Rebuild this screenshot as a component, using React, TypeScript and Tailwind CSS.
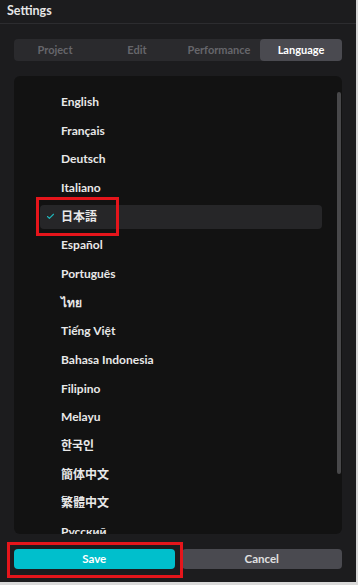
import { Check } from 'lucide-react'

const languages = [
  'English',
  'Français',
  'Deutsch',
  'Italiano',
  '日本語',
  'Español',
  'Português',
  'ไทย',
  'Tiếng Việt',
  'Bahasa Indonesia',
  'Filipino',
  'Melayu',
  '한국인',
  '簡体中文',
  '繁體中文',
  'Русский',
]

const tabs = ['Project', 'Edit', 'Performance', 'Language']

export default function App() {
  return (
    <div
      className="w-[358px] h-[585px] bg-[#d9d9d9] overflow-hidden"
      style={{ fontFamily: 'Lato, "Noto Sans", "DejaVu Sans", "Noto Sans CJK JP", sans-serif' }}
    >
      <div className="w-[356px] h-[582px] bg-[#1c1c1e] flex flex-col">
        {/* Header */}
        <div className="h-[24px] border-b border-[#2c2c2f] px-[7px] flex items-center">
          <span className="text-[12.5px] font-bold text-[#e6e6e6]">Settings</span>
        </div>

        {/* Tabs */}
        <div className="mx-[14px] mt-[15px] h-[22px] rounded-[4px] bg-[#2a2a2d] flex">
          {tabs.map((t) => (
            <div
              key={t}
              className={`flex-1 flex items-center justify-center rounded-[4px] text-[11px] font-bold ${
                t === 'Language' ? 'bg-[#4a4a50] text-white' : 'text-[#66666b]'
              }`}
            >
              {t}
            </div>
          ))}
        </div>

        {/* Language list */}
        <div className="relative mx-[14px] mt-[15px] h-[458px] rounded-[6px] bg-[#121212] overflow-hidden">
          <div className="pt-[14px] pl-[26px] pr-[20px] flex flex-col gap-[4.67px]">
            {languages.map((lang) => {
              const active = lang === '日本語'
              return (
                <div
                  key={lang}
                  className={`h-[24px] shrink-0 flex items-center rounded-[4px] ${active ? 'bg-[#262628]' : ''}`}
                >
                  <div className="w-[21px] flex justify-center">
                    {active && <Check className="w-[9px] h-[9px] text-[#1fb5b9]" strokeWidth={3} />}
                  </div>
                  <span className="text-[12px] font-bold text-[#e8e8e8]">{lang}</span>
                </div>
              )
            })}
          </div>
          {/* scrollbar */}
          <div className="absolute right-[1px] top-[16px] w-[4px] h-[382px] rounded-full bg-[#48484a]" />
          {/* annotation */}
          <div className="absolute left-[22px] top-[121px] w-[83px] h-[39px] border-[3px] border-[#e5151b]" />
        </div>

        {/* Buttons */}
        <div className="relative mx-[14px] mt-[15px] flex gap-[7px]">
          <button className="flex-1 h-[20px] rounded-[4px] bg-[#00bfcc] text-white text-[11.5px] font-bold">
            Save
          </button>
          <button className="flex-1 h-[20px] rounded-[4px] bg-[#4a4a50] text-[#e0e0e0] text-[11.5px] font-bold">
            Cancel
          </button>
          <div className="absolute left-[-7px] top-[-7px] w-[176px] h-[36px] border-[3px] border-[#e5151b]" />
        </div>
      </div>
    </div>
  )
}
